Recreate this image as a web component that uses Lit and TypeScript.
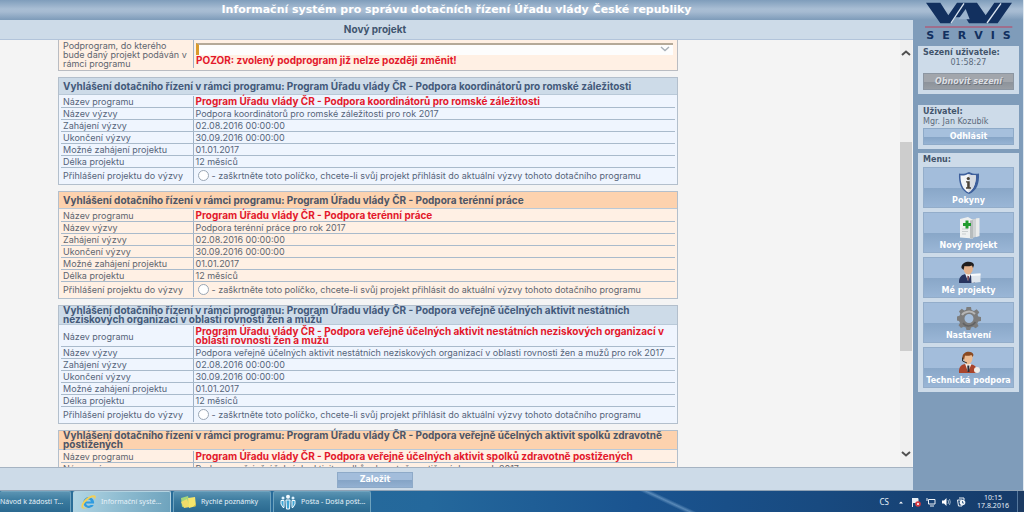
import { LitElement, html, css, svg, nothing } from "lit";
import { customElement, property } from "lit/decorators.js";
import { classMap } from "lit/directives/class-map.js";

interface Call {
  id: string;
  tone: "blue" | "orange";
  program: string;
  call: string;
}

const OFFICE = "Program Úřadu vlády ČR - ";

const CALLS: Call[] = [
  {
    id: "romove",
    tone: "blue",
    program: "Podpora koordinátorů pro romské záležitosti",
    call: "Podpora koordinátorů pro romské záležitosti pro rok 2017",
  },
  {
    id: "teren",
    tone: "orange",
    program: "Podpora terénní práce",
    call: "Podpora terénní práce pro rok 2017",
  },
  {
    id: "rovnost",
    tone: "blue",
    program:
      "Podpora veřejně účelných aktivit nestátních neziskových organizací v oblasti rovnosti žen a mužů",
    call: "Podpora veřejně účelných aktivit nestátních neziskových organizací v oblasti rovnosti žen a mužů pro rok 2017",
  },
  {
    id: "spolky",
    tone: "orange",
    program: "Podpora veřejně účelných aktivit spolků zdravotně postižených",
    call: "Podpora veřejně účelných aktivit spolků zdravotně postižených pro rok 2017",
  },
];

const shieldIcon = svg`
  <path d="M12 1C8 3 5 3 2 2.500C1.500 12 4 20 12 23C20 20 22.500 12 22 2.500C19 3 16 3 12 1Z" fill="#3d5f9c"/>
  <path d="M11 3C8 4.500 6 4.700 3.500 4.300C3.300 12 5.500 18.500 11.500 21.500C17 18.500 19 12 18.800 4.300C16 4.500 13.500 4.200 11 3Z" fill="#f2f4f7"/>
  <path d="M11.500 3V21.500C17 18.500 19 12 18.800 4.300C16 4.500 13.500 4.200 11.500 3Z" fill="#d5dae2"/>
  <circle cx="11.300" cy="7.500" r="1.600" fill="#4a4238"/>
  <path d="M9 10.200H12.700V16.300H14V17.800H9V16.300H10.200V11.600H9Z" fill="#4a4238"/>`;

const projectIcon = svg`
  <path d="M13 4L22 2V20L13 22.500Z" fill="#cfd3d4"/>
  <path d="M19 2.600L22.500 2V20L19 21Z" fill="#e9ebeb"/>
  <path d="M3 3L11 1L16 4V22.500L3 21.500Z" fill="#eef0f0"/>
  <path d="M13 4.500L16 4V22.500L13 22Z" fill="#b7bcbd"/>
  <path d="M5 13H11M5 15.500H11M5 18H9" stroke="#c9cecf" stroke-width="1"/>
  <path d="M8.500 4.500H11.500V7H14V10H11.500V12.500H8.500V10H6V7H8.500Z" fill="#1f9b2e"/>`;

const personIcon = svg`
  <path d="M2 21C2 15.500 5 13.500 9 13L15 13.500C18 15 19 18 18 22H3C2 22 2 21.500 2 21Z" fill="#27345f"/>
  <path d="M8 12.500L11 20L14 13Z" fill="#f1f1f1"/>
  <path d="M10.500 14.500L12 15.500L11.500 20L10.300 18Z" fill="#5d2230"/>
  <path d="M6 5C6 1.500 15 0.500 16 5C16.500 9 14.500 13.500 11.500 13.500C8.500 13.500 6 10 6 5Z" fill="#e3b28c"/>
  <path d="M4.500 7C3.500 0 16 -1.500 17 4L16 7L15 4.500C12 5.500 9 5.500 7.500 5L6.500 9Z" fill="#201d1d"/>
  <path d="M14 13L23.500 12.500V21L14.500 22Z" fill="#dfe6ee"/>
  <path d="M14 13L23.500 12.500V14.500L14 15Z" fill="#f8fafc"/>`;

const gearIcon = svg`
  <path fill-rule="evenodd" d="M9.500 1H14L14.500 4L17 5L19.700 3.300L22.300 6.200L20.500 8.700L21.300 10.500L24 11V15L21.300 15.500L20.300 17.500L21.500 20L18.700 22.300L16.300 20.800L14 21.500L13.200 24H9.500L8.800 21.500L6.500 20.700L4 22L1.500 19.300L3 17L2 15L0 14.500V10.500L2.500 9.800L3.300 7.800L2 5.200L4.800 2.800L7.200 4.500L9 3.800ZM12 8A4.500 4.500 0 1 0 12 17A4.500 4.500 0 1 0 12 8Z" fill="#7c7c7c"/>
  <path d="M5 9C7 5.500 14 4 18 8" stroke="#b5b5b5" stroke-width="2" fill="none"/>
  <path d="M6 17C9 21 15 21 18.500 16" stroke="#636363" stroke-width="1.500" fill="none"/>`;

const supportIcon = svg`
  <path d="M2 22C1.500 16 4 13.500 8.500 13L15 13.500C19 14.500 20.500 18 20 22Z" fill="#a9452c"/>
  <path d="M8 12.500L11 21L14.500 13Z" fill="#f4f0ec"/>
  <path d="M10.300 14.500H12.300L12.500 21H10.500Z" fill="#2b2b35"/>
  <path d="M6.500 5C6.500 1.500 15 0.500 15.500 5C16 9 14 13.500 11 13.500C8.500 13.500 6.500 10 6.500 5Z" fill="#ecbd94"/>
  <path d="M5.500 7C4.500 0 15.500 -1.500 16.500 4L15.500 6L14.500 4C12 5 9 5 8 4.500L7 9Z" fill="#8a4a22"/>
  <path d="M5.500 6.500V10L10 12" stroke="#333" stroke-width="1" fill="none"/>
  <circle cx="20" cy="19" r="3" fill="#f1ede8"/>`;

const MENU = [
  { label: "Pokyny", icon: shieldIcon },
  { label: "Nový projekt", icon: projectIcon },
  { label: "Mé projekty", icon: personIcon },
  { label: "Nastavení", icon: gearIcon },
  { label: "Technická podpora", icon: supportIcon },
];

@customElement("grant-call")
class GrantCall extends LitElement {
  @property({ attribute: false }) data!: Call;

  static styles = css`
    :host {
      display: block;
      flex: none;
    }
    .box {
      border: 1px solid #b3bfcc;
      background: #eff5fe;
      color: #55647a;
    }
    .box.orange {
      background: #fff0e4;
      color: #60656f;
    }
    .head {
      display: flex;
      align-items: center;
      min-height: 16px;
      margin: 0;
      padding: 0 4px;
      border-bottom: 1px solid #b9c9d8;
      background: #cddbe8;
      color: #43597a;
      font-size: 10px;
      line-height: 9px;
      font-weight: bold;
    }
    .orange .head {
      background: #fdd2ae;
      color: #4d5566;
    }
    .rows {
      width: calc(100% - 4px);
      margin: 1px 2px;
      border-collapse: collapse;
      font-size: 9px;
      line-height: 9px;
    }
    .rows th {
      box-sizing: border-box;
      width: 132px;
      padding: 1px 2px;
      border-right: 1px solid #9fb1c6;
      border-bottom: 1px solid #a9bacb;
      font-weight: normal;
      text-align: left;
    }
    .rows td {
      padding: 1px 2px;
      border-bottom: 1px solid #a9bacb;
    }
    .rows tr:last-child > * {
      border-bottom: 0;
    }
    .rows .program {
      color: #e3182b;
      font-size: 10px;
      font-weight: bold;
    }
    .pick {
      display: flex;
      align-items: center;
      gap: 3px;
      padding: 1px 0;
    }
    .radio {
      appearance: none;
      box-sizing: border-box;
      width: 11px;
      height: 11px;
      margin: 0 0 0 2px;
      border: 1px solid #9aa6b4;
      border-radius: 50%;
      background: #fff;
    }
    .radio:checked {
      background: radial-gradient(#43597a 35%, #fff 45%);
    }
  `;

  render() {
    const d = this.data;
    const plain = [
      ["Název výzvy", d.call],
      ["Zahájení výzvy", "02.08.2016 00:00:00"],
      ["Ukončení výzvy", "30.09.2016 00:00:00"],
      ["Možné zahájení projektu", "01.01.2017"],
      ["Délka projektu", "12 měsíců"],
    ];
    return html`
      <section class=${classMap({ box: true, orange: d.tone === "orange" })}>
        <h2 class="head">Vyhlášení dotačního řízení v rámci programu: ${OFFICE}${d.program}</h2>
        <table class="rows">
          <tr>
            <th scope="row">Název programu</th>
            <td class="program">${OFFICE}${d.program}</td>
          </tr>
          ${plain.map(([k, v]) => html`<tr><th scope="row">${k}</th><td>${v}</td></tr>`)}
          <tr>
            <th scope="row">Přihlášení projektu do výzvy</th>
            <td>
              <label class="pick">
                <input class="radio" type="radio" name="vyzva" value=${d.id} />
                <span>- zaškrtněte toto políčko, chcete-li svůj projekt přihlásit do aktuální výzvy tohoto dotačního programu</span>
              </label>
            </td>
          </tr>
        </table>
      </section>
    `;
  }
}

@customElement("side-bar")
class SideBar extends LitElement {
  static styles = css`
    :host {
      display: flex;
      flex-direction: column;
      padding: 0 4px 0 5px;
      font-family: "DejaVu Sans", Verdana, sans-serif;
      font-size: 8px;
      line-height: 10px;
      color: #5b6a7b;
    }
    .logo {
      height: 46px;
      display: flex;
      flex-direction: column;
      align-items: center;
      color: #12305f;
    }
    .mark {
      width: 92px;
      height: 28px;
      display: block;
    }
    .word {
      font-size: 11px;
      line-height: 16px;
      font-weight: bold;
      letter-spacing: 8px;
      padding-left: 8px;
    }
    .panel {
      display: flex;
      flex-direction: column;
      padding: 2px 5px 4px;
      background: #cddbe9;
    }
    .session {
      margin-bottom: 11px;
    }
    .user {
      margin-bottom: 4px;
    }
    .caption {
      margin: 0;
      font-size: 8px;
      line-height: 10px;
      color: #42546b;
    }
    .time {
      text-align: center;
      margin-bottom: 5px;
    }
    .name {
      margin-bottom: 1px;
    }
    .btn {
      height: 17px;
      padding: 0;
      border: 1px solid #8eaac8;
      background: linear-gradient(#a6c0dd 0 50%, #85a4c6 52%, #96b3d3);
      color: #fff;
      font: bold 8px/10px "DejaVu Sans", Verdana, sans-serif;
    }
    .btn:disabled {
      background: linear-gradient(#a2a6ac 0 50%, #8c929a 52%, #989da4);
      border-color: #8c96a2;
      color: #dcdfe3;
      font-style: italic;
      text-shadow: 1px 1px 0 #6d737b;
    }
    .menu {
      display: grid;
      gap: 4px;
      margin-top: 2px;
    }
    .item {
      height: 41px;
      display: flex;
      flex-direction: column;
      align-items: center;
      justify-content: flex-end;
      gap: 1px;
      padding: 0 0 1px;
      border: 1px solid #93adca;
      background: linear-gradient(#a3bddb 0 50%, #89a7c8 52%, #9ab6d6);
      color: #fff;
      font: bold 8px/10px "DejaVu Sans", Verdana, sans-serif;
      white-space: nowrap;
    }
    .icon {
      width: 24px;
      height: 24px;
    }
  `;

  render() {
    return html`
      <div class="logo">
        <svg class="mark" viewBox="66 0 276 84" role="img" aria-label="VAV">
          <path d="M75 8H118L142 46L168 8H228L254 46L280 8H333L290 70H204L193 52H163L150 70H118Z" fill="#12305f"/>
          <path d="M189 10L150 69" stroke="#dbe5f0" stroke-width="4"/>
          <path d="M194 27L172 58H206Z" fill="#9cb4cf"/>
          <path d="M300 10L258 69" stroke="#dbe5f0" stroke-width="4"/>
          <path d="M72 81H334" stroke="#c0415e" stroke-width="3"/>
        </svg>
        <span class="word">SERVIS</span>
      </div>
      <section class="panel session">
        <h3 class="caption">Sezení uživatele:</h3>
        <span class="time">01:58:27</span>
        <button class="btn" disabled>Obnovit sezení</button>
      </section>
      <section class="panel user">
        <h3 class="caption">Uživatel:</h3>
        <span class="name">Mgr. Jan Kozubík</span>
        <button class="btn">Odhlásit</button>
      </section>
      <section class="panel">
        <h3 class="caption">Menu:</h3>
        <nav class="menu">
          ${MENU.map(
            (m) => html`<button class="item">
              <svg class="icon" viewBox="0 0 24 24" aria-hidden="true">${m.icon}</svg>
              <span>${m.label}</span>
            </button>`
          )}
        </nav>
      </section>
    `;
  }
}

const ieIcon = svg`
  <path d="M8.500 3A5.500 5.500 0 1 0 13.700 11H10.600A2.700 2.700 0 0 1 6 9.500H14A5.500 5.500 0 0 0 8.500 3ZM6 7.500A2.600 2.600 0 0 1 11 7.500Z" fill="#2f9be0"/>
  <path d="M2 14C-1 11 8 0 15 1.500C17 2.500 15 5 14.500 5.500C15 3 12.500 2.500 9 5C5 8 2 12.500 3.500 13.500C5 14.200 7 13.500 8 13C6 14.700 3.500 15.300 2 14Z" fill="#f2cf57"/>`;
const notesIcon = svg`
  <path d="M1 4L8 2L10 11L2 13Z" fill="#a5d67b"/>
  <path d="M1 8L7 5L10 13L4 14Z" fill="#f0dc6a"/>
  <path d="M8 4L15 3L16 12L9 14Z" fill="#f7e66b"/>
  <path d="M13 13L16 12L15.800 10Z" fill="#c9b640"/>`;
const mailIcon = svg`
  <circle cx="8" cy="2.800" r="2" fill="#f4fbff"/>
  <circle cx="3" cy="4" r="1.500" fill="#dff3ff"/>
  <circle cx="13" cy="4" r="1.500" fill="#dff3ff"/>
  <path d="M6 6H10L9.500 15H6.500ZM1 6.500H4V13.500H3L1 10ZM15 6.500H12V13.500H13L15 10Z" fill="#3fa6d6" stroke="#f0faff" stroke-width="1"/>`;

const TASKS = [
  { label: "Návod k žádosti T...", icon: null, active: false },
  { label: "Informační systé...", icon: ieIcon, active: true },
  { label: "Rychlé poznámky", icon: notesIcon, active: false },
  { label: "Pošta - Došlá pošt...", icon: mailIcon, active: false },
];

@customElement("task-bar")
class TaskBar extends LitElement {
  static styles = css`
    :host {
      box-sizing: border-box;
      display: flex;
      justify-content: space-between;
      height: 21px;
      background:
        linear-gradient(205deg, transparent 0 44%, rgba(150, 190, 225, 0.5) 50%, transparent 56%) 636px 0 / 64px 100% no-repeat,
        linear-gradient(90deg, #2c6f97, #24689c 42%, #1a5490 62%, #184a80 80%, #163a68);
      color: #e6f1f9;
      font-family: "Noto Sans", "Open Sans", sans-serif;
      font-size: 7px;
      line-height: 10px;
    }
    .tasks {
      display: flex;
      gap: 2px;
    }
    .task {
      box-sizing: border-box;
      width: 98px;
      display: flex;
      align-items: center;
      gap: 4px;
      padding: 0 4px 0 6px;
      border: 1px solid #6fa3be;
      border-width: 1px 1px 0;
      border-radius: 2px 2px 0 0;
      background: linear-gradient(#5a93b2, #3a7a9e 45%, #2a6990);
      color: inherit;
      font: inherit;
      white-space: nowrap;
    }
    .task.plain {
      width: 71px;
      padding: 0;
      border-left: 0;
    }
    .task.active {
      border-color: #b4d3e0;
      background: linear-gradient(100deg, #b3d6e4, #8dbbd0 50%, #6ea3bd);
    }
    .icon {
      width: 17px;
      height: 16px;
      flex: none;
    }
    .tray {
      display: flex;
      align-items: center;
      gap: 5px;
    }
    .lang {
      margin-right: 2px;
      font-size: 8px;
    }
    .tray-icon {
      width: 10px;
      height: 10px;
    }
    .clock {
      width: 44px;
      margin-right: 1px;
      text-align: center;
      line-height: 8px;
    }
    .desk {
      align-self: stretch;
      width: 6px;
      margin-left: -4px;
      border-left: 1px solid #56789d;
      background: #1b3a62;
    }
  `;

  render() {
    return html`
      <nav class="tasks">
        ${TASKS.map(
          (t) => html`<button class=${classMap({ task: true, active: t.active, plain: !t.icon })}>
            ${t.icon
              ? html`<svg class="icon" viewBox="0 0 17 16" aria-hidden="true">${t.icon}</svg>`
              : nothing}
            <span>${t.label}</span>
          </button>`
        )}
      </nav>
      <div class="tray">
        <span class="lang">CS</span>
        <svg class="tray-icon" viewBox="0 0 10 10"><path d="M3 6.500L5 4.500L7 6.500Z" fill="#fff"/></svg>
        <svg class="tray-icon" viewBox="0 0 10 10">
          <path d="M1.500 1V10M2 1.500H7V5.500H2Z" stroke="#e8eef4" fill="#e8eef4"/>
          <circle cx="7" cy="7" r="2.800" fill="#d8383f"/><path d="M6 6L8 8M8 6L6 8" stroke="#fff" stroke-width=".8"/>
        </svg>
        <svg class="tray-icon" viewBox="0 0 10 10">
          <path d="M2.500 2.500H9V7H2.500ZM4 9H8M1 1V4" stroke="#eef3f8" fill="none"/>
        </svg>
        <svg class="tray-icon" viewBox="0 0 10 10">
          <path d="M1 3.500H3L5.500 1V9L3 6.500H1Z" fill="#fff"/>
          <path d="M7 3Q8.200 5 7 7M8.500 2Q10 5 8.500 8" stroke="#b9cbdc" stroke-width=".8" fill="none"/>
        </svg>
        <svg class="tray-icon" viewBox="0 0 10 10">
          <path d="M1.500 3H6V9H2.500ZM3 1H8V3" stroke="#eef3f8" fill="none"/><circle cx="6.500" cy="5.500" r="2.800" fill="#eef3f8"/>
          <path d="M6.500 4V6H8" stroke="#24507f" stroke-width=".8" fill="none"/>
        </svg>
        <time class="clock">10:15<br />17.8.2016</time>
        <span class="desk"></span>
      </div>
    `;
  }
}

@customElement("app-root")
class AppRoot extends LitElement {
  static styles = css`
    :host {
      display: flex;
      flex-direction: column;
      height: 100vh;
      overflow: hidden;
      font-family: Inter, "DejaVu Sans", Verdana, sans-serif;
      font-size: 9px;
      line-height: 9px;
    }
    .page {
      flex: 1;
      min-height: 0;
      display: grid;
      grid-template-columns: minmax(0, 1fr) 110px;
      grid-template-rows: minmax(0, 1fr);
      border-right: 1px solid #dfe8f0;
      border-bottom: 1px solid #8fa2b5;
      background: linear-gradient(#7f9dbb, #a9bed4 45%, #a5bad1 60%, #7d9bb9) 0 0 / 100% 20px no-repeat #7f9cba;
    }
    .main {
      min-height: 0;
      display: flex;
      flex-direction: column;
    }
    .title {
      margin: 0;
      font-family: "DejaVu Sans", Verdana, sans-serif;
      font-size: 11px;
      line-height: 20px;
      text-align: center;
      color: #fff;
    }
    .strip {
      background: #cddbe8;
      color: #41556f;
    }
    .sub {
      border-bottom: 1px solid #b2c4da;
    }
    .center {
      max-width: 750px;
      display: flex;
      justify-content: center;
    }
    .heading {
      margin: 0;
      font-size: 10px;
      line-height: 19px;
    }
    .scroller {
      flex: 1;
      min-height: 0;
      display: flex;
      justify-content: space-between;
      overflow: hidden;
      background: #f4f4f4;
    }
    .content {
      flex: 1;
      max-width: 620px;
      margin-left: 58px;
      display: flex;
      flex-direction: column;
      gap: 6px;
    }
    .sub-box {
      flex: none;
      display: flex;
      padding: 0 2px 2px;
      border: 1px solid #b9bcc2;
      border-top: 0;
      background: #fff0e4;
      color: #60656f;
    }
    .label {
      box-sizing: border-box;
      width: 133px;
      padding: 1px 2px 0;
      border-right: 1px solid #9fb1c6;
      white-space: nowrap;
    }
    .field {
      flex: 1;
      padding: 3px 2px 0;
    }
    .select {
      appearance: none;
      display: block;
      box-sizing: border-box;
      width: 100%;
      height: 12px;
      padding: 0;
      border: 0;
      border-top: 2px solid #b5a998;
      border-left: 3px solid #d99a2b;
      border-radius: 0;
      background: #fdfdfd;
      font: inherit;
    }
    .combo {
      display: grid;
    }
    .combo > * {
      grid-area: 1 / 1;
    }
    .chevron {
      width: 10px;
      height: 6px;
      margin: 0 3px 0 0;
      justify-self: end;
      align-self: center;
      pointer-events: none;
    }
    .warn {
      margin: 0;
      font-size: 10px;
      line-height: 11px;
      font-weight: bold;
      color: #e3182b;
    }
    .bar {
      width: 12px;
      margin-right: 1px;
      display: flex;
      flex-direction: column;
      align-items: center;
      background: #f0f0f0;
    }
    .arrow {
      width: 10px;
      height: 6px;
      margin: 10px 0;
      flex: none;
    }
    .track {
      flex: 1;
      align-self: stretch;
      display: flex;
      flex-direction: column;
    }
    .lead {
      flex: 76;
    }
    .thumb {
      flex: 210;
      background: #cdcdcd;
    }
    .rest {
      flex: 90;
    }
    .foot {
      padding: 4px 0 2px;
      border-top: 1px solid #a5b3c2;
    }
    .submit {
      width: 76px;
      height: 16px;
      padding: 0;
      border: 1px solid #8eaac8;
      background: linear-gradient(#a3bddb 0 50%, #85a4c6 52%, #93b0d1);
      color: #fff;
      font: bold 8px/10px "DejaVu Sans", Verdana, sans-serif;
    }
  `;

  render() {
    return html`
      <div class="page">
        <div class="main">
          <h1 class="title">Informační systém pro správu dotačních řízení Úřadu vlády České republiky</h1>
          <div class="strip sub">
            <div class="center"><h2 class="heading">Nový projekt</h2></div>
          </div>
          <div class="scroller">
            <div class="content">
              <div class="sub-box">
                <label class="label" for="podprogram">Podprogram, do kterého<br />bude daný projekt podáván v<br />rámci programu</label>
                <div class="field">
                  <div class="combo">
                    <select class="select" id="podprogram"><option></option></select>
                    <svg class="chevron" viewBox="0 0 10 6"><path d="M1 1L5 4.500L9 1" stroke="#a8b0b8" stroke-width="1.400" fill="none"/></svg>
                  </div>
                  <p class="warn">POZOR: zvolený podprogram již nelze později změnit!</p>
                </div>
              </div>
              ${CALLS.map((c) => html`<grant-call .data=${c}></grant-call>`)}
            </div>
            <div class="bar">
              <svg class="arrow" viewBox="0 0 10 6"><path d="M1 5L5 1.500L9 5" stroke="#505050" stroke-width="2" fill="none"/></svg>
              <div class="track">
                <div class="lead"></div>
                <div class="thumb"></div>
                <div class="rest"></div>
              </div>
              <svg class="arrow" viewBox="0 0 10 6"><path d="M1 1L5 4.500L9 1" stroke="#505050" stroke-width="2" fill="none"/></svg>
            </div>
          </div>
          <div class="strip foot">
            <div class="center"><button class="submit">Založit</button></div>
          </div>
        </div>
        <side-bar></side-bar>
      </div>
      <task-bar></task-bar>
    `;
  }
}
